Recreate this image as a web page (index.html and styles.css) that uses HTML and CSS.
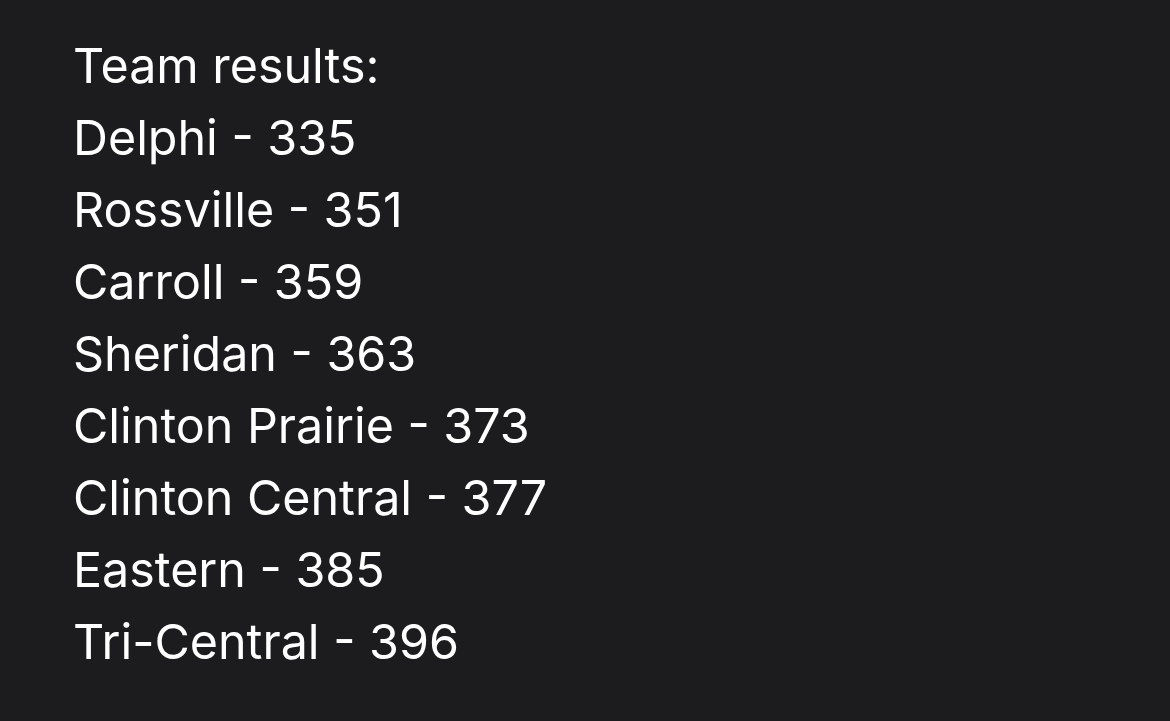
FILE: index.html
```html
<!DOCTYPE html>
<html>
<head>
<meta charset="utf-8">
<link rel="stylesheet" href="styles.css">
</head>
<body>
<div class="results">
  <div class="line">Team results:</div>
  <div class="line">Delphi - 335</div>
  <div class="line">Rossville - 351</div>
  <div class="line">Carroll - 359</div>
  <div class="line">Sheridan - 363</div>
  <div class="line">Clinton Prairie - 373</div>
  <div class="line">Clinton Central - 377</div>
  <div class="line">Eastern - 385</div>
  <div class="line">Tri-Central - 396</div>
</div>
</body>
</html>
```
FILE: styles.css
```css
html, body {
  margin: 0;
  padding: 0;
  background: #1c1c1e;
  height: 100%;
}
.results {
  padding: 30px 0 0 73px;
  font-family: Inter, "Noto Sans", sans-serif;
  font-size: 48.4px;
  line-height: 72px;
  color: #ffffff;
}
.line {
  white-space: nowrap;
}
```
